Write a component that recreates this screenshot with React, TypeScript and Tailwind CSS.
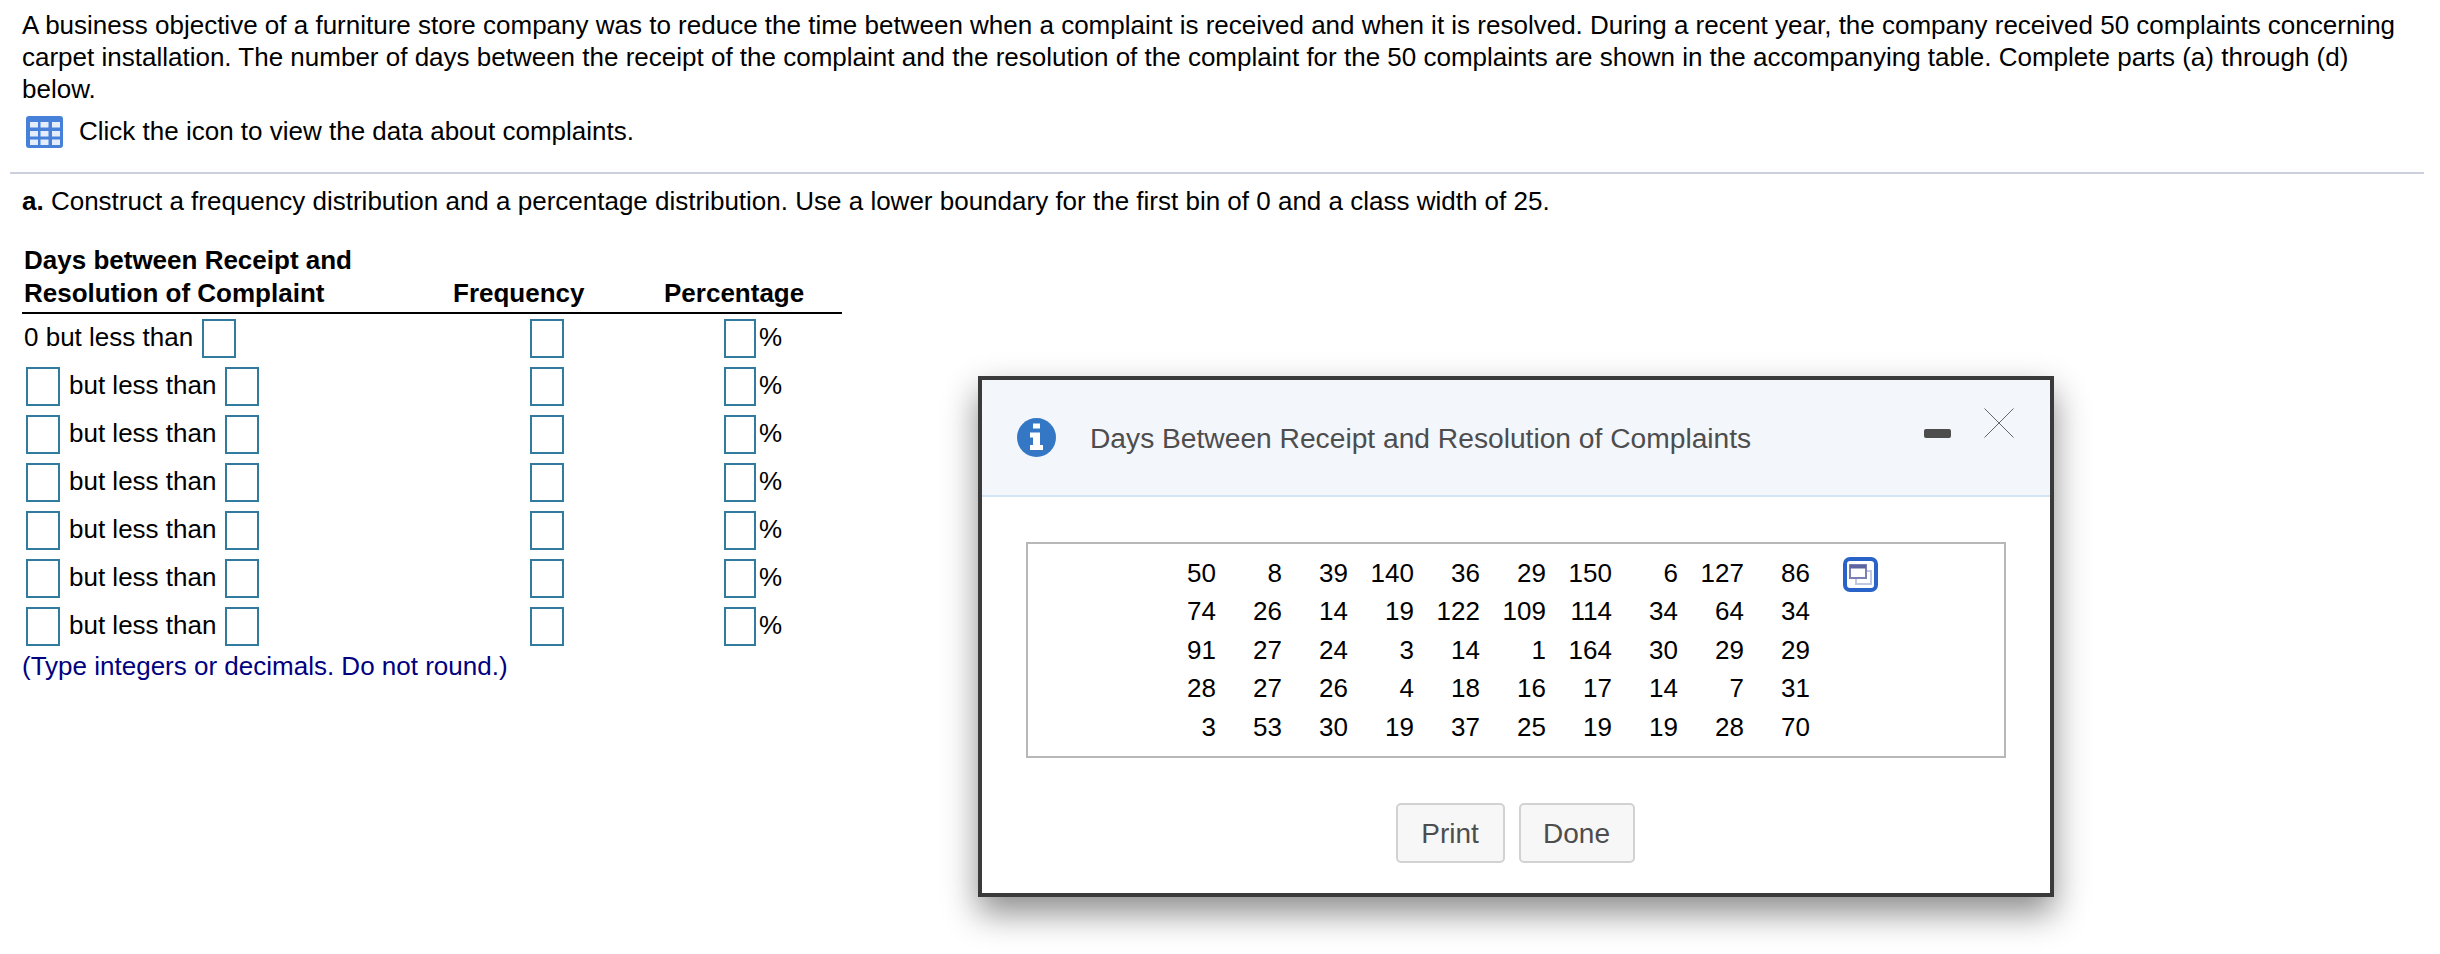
import React from 'react';

const DATA = [
  [50, 8, 39, 140, 36, 29, 150, 6, 127, 86],
  [74, 26, 14, 19, 122, 109, 114, 34, 64, 34],
  [91, 27, 24, 3, 14, 1, 164, 30, 29, 29],
  [28, 27, 26, 4, 18, 16, 17, 14, 7, 31],
  [3, 53, 30, 19, 37, 25, 19, 19, 28, 70],
];

const Box = ({ w = 'w-[34px]' }: { w?: string }) => (
  <div className={`${w} h-[39px] shrink-0 border-2 border-[#337a9f] bg-white`} />
);

const TableIcon = () => (
  <svg width="37" height="32" viewBox="0 0 37 32" className="shrink-0">
    <rect width="37" height="32" rx="3" fill="#4680d9" />
    {[6, 15, 23.5].map((y) =>
      [4, 14.5, 26].map((x) => (
        <rect key={`${x}-${y}`} x={x} y={y} width="8" height="5.5" fill="#e4edf9" />
      ))
    )}
  </svg>
);

const InfoIcon = () => (
  <svg width="39" height="39" viewBox="0 0 39 39" className="shrink-0">
    <circle cx="19.5" cy="19.5" r="19.5" fill="#3478c5" />
    <rect x="16" y="5.5" width="7" height="5" fill="#fff" />
    <path d="M13 14.5h10v12.500h3v5h-13v-5h3v-7.500h-3z" fill="#fff" />
  </svg>
);

const CopyIcon = () => (
  <div className="ml-[33px] mt-[3px] h-[35px] w-[35px] rounded-[7px] border-[4px] border-[#2a63c8] bg-white">
    <svg width="27" height="27" viewBox="0 0 27 27">
      <rect x="9" y="10" width="15" height="13" fill="#fff" stroke="#c3c8e2" strokeWidth="2" />
      <rect x="3" y="4" width="16" height="13" fill="#fff" stroke="#7a80b4" strokeWidth="2" />
      <rect x="3" y="4" width="16" height="3.5" fill="#5d64a2" />
    </svg>
  </div>
);

const App = () => {
  return (
    <div className="relative h-[954px] w-full overflow-hidden bg-white font-['Liberation_Sans',Arial,sans-serif] text-[26px] leading-[32px] text-black">
      <div className="pl-[22px] pr-[16px] pt-[9px]">
        <p>
          A business objective of a furniture store company was to reduce the time between when a complaint is received and when it is resolved. During a recent year, the company received 50 complaints concerning carpet installation. The number of days between the receipt of the complaint and the resolution of the complaint for the 50 complaints are shown in the accompanying table. Complete parts (a) through (d) below.
        </p>
        <div className="mt-[11px] flex h-[32px] items-center gap-[16px] pl-[4px]">
          <TableIcon />
          <span className="pb-[2px]">Click the icon to view the data about complaints.</span>
        </div>
      </div>

      <div className="ml-[10px] mr-[16px] mt-[24px] h-[2px] bg-[#ccd0dc]" />

      <div className="pl-[22px]">
        <p className="mt-[11px]">
          <b>a.</b> Construct a frequency distribution and a percentage distribution. Use a lower boundary for the first bin of 0 and a class width of 25.
        </p>

        <div className="mt-[27px] w-[820px]">
          <div className="flex items-end border-b-2 border-black pb-[2px] font-bold leading-[33px]">
            <div className="w-[431px] pl-[2px]">
              Days between Receipt and
              <br />
              Resolution of Complaint
            </div>
            <div className="w-[211px]">Frequency</div>
            <div>Percentage</div>
          </div>

          {[0, 1, 2, 3, 4, 5, 6].map((i) => (
            <div key={i} className="flex h-[48px] items-center">
              {i === 0 ? (
                <div className="flex w-[508px] items-center pl-[2px]">
                  <span className="pb-[2px]">0 but less than</span>
                  <div className="ml-[9px]"><Box /></div>
                </div>
              ) : (
                <div className="flex w-[508px] items-center pl-[4px]">
                  <Box />
                  <span className="mx-[9px] pb-[2px]">but less than</span>
                  <Box />
                </div>
              )}
              <div className="w-[194px]"><Box /></div>
              <Box w="w-[32px]" />
              <span className="ml-[3px] pb-[2px]">%</span>
            </div>
          ))}
          <p className="text-[#000080]">(Type integers or decimals. Do not round.)</p>
        </div>
      </div>

      {/* data popup */}
      <div className="absolute left-[978px] top-[376px] h-[521px] w-[1076px] border-[4px] border-[#3a3a3a] bg-white shadow-[0_16px_32px_rgba(0,0,0,0.45)]">
        <div className="flex h-[117px] items-center border-b-2 border-[#d3e4f5] bg-[#f3f6fb] pl-[35px] text-[#4d4d4d]">
          <InfoIcon />
          <span className="ml-[34px] text-[28.2px]">Days Between Receipt and Resolution of Complaints</span>
          <div className="ml-auto mr-[36px] mt-[28px] flex items-start self-start">
            <div className="mt-[21px] h-[9px] w-[27px] rounded-[2px] bg-[#4d4d4d]" />
            <svg width="30" height="30" viewBox="0 0 30 30" className="ml-[33px]">
              <path d="M0.5 0.5L29.500 29.500M29.500 0.5L0.500 29.500" stroke="#666" strokeWidth="1" fill="none" />
            </svg>
          </div>
        </div>

        <div className="mx-[44px] mt-[45px] flex h-[216px] items-start border-2 border-[#b8b8b8] pl-[122px] pt-[10px]">
          <div className="grid grid-cols-[repeat(10,66px)] text-right leading-[38.4px]">
            {DATA.flat().map((n, i) => (
              <span key={i}>{n}</span>
            ))}
          </div>
          <CopyIcon />
        </div>

        <div className="mt-[45px] flex justify-center gap-[14px] pr-[2px] text-[28px] text-[#4d4d4d]">
          <button className="h-[60px] w-[109px] rounded-[5px] border-2 border-[#d2d2d2] bg-[#f7f7f7] pt-[2px]">Print</button>
          <button className="h-[60px] w-[116px] rounded-[5px] border-2 border-[#d2d2d2] bg-[#f7f7f7] pt-[2px]">Done</button>
        </div>
      </div>
    </div>
  );
};

export default App;
